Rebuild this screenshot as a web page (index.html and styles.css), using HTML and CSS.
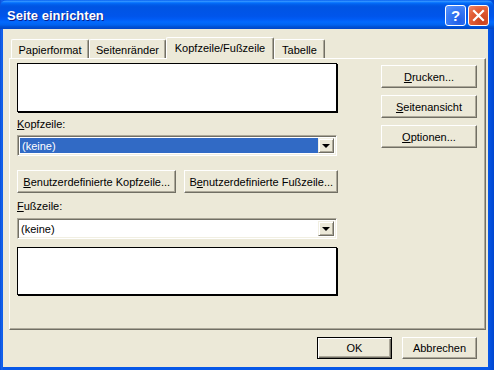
FILE: index.html
```html
<!DOCTYPE html>
<html lang="de">
<head>
  <meta charset="UTF-8">
  <title>Seite einrichten</title>
  <link rel="stylesheet" href="styles.css">
</head>
<body>

  <!-- Dialogfenster -->
  <div class="window">
    <div class="titlebar">
      <span class="title">Seite einrichten</span>
      <div class="caption-buttons">
        <div class="cap-btn help">?</div>
        <div class="cap-btn close">
          <svg width="13" height="13" viewBox="0 0 13 13">
            <path d="M2 2 L11 11 M11 2 L2 11" stroke="#fff" stroke-width="2.2" stroke-linecap="square"/>
          </svg>
        </div>
      </div>
    </div>

    <div class="client">
      <!-- Registerkarten -->
      <div class="tabs">
        <div class="tab tab-papier">Papierformat</div>
        <div class="tab tab-raender">Seitenränder</div>
        <div class="tab tab-kopf active">Kopfzeile/Fußzeile</div>
        <div class="tab tab-tabelle">Tabelle</div>
      </div>

      <div class="panel">
        <div class="left-col">
          <div class="preview preview-top"></div>

          <div class="field-label label-kopf"><u>K</u>opfzeile:</div>
          <div class="combo combo-kopf">
            <div class="combo-text selected"><span class="focus-rect">(keine)</span></div>
            <div class="combo-btn"><span class="arrow"></span></div>
          </div>

          <div class="custom-row">
            <button class="btn btn-custom-kopf"><u>B</u>enutzerdefinierte Kopfzeile...</button>
            <button class="btn btn-custom-fuss">B<u>e</u>nutzerdefinierte Fußzeile...</button>
          </div>

          <div class="field-label label-fuss"><u>F</u>ußzeile:</div>
          <div class="combo combo-fuss">
            <div class="combo-text">(keine)</div>
            <div class="combo-btn"><span class="arrow"></span></div>
          </div>

          <div class="preview preview-bottom"></div>
        </div>

        <div class="right-col">
          <button class="btn side-btn"><u>D</u>rucken...</button>
          <button class="btn side-btn"><u>S</u>eitenansicht</button>
          <button class="btn side-btn"><u>O</u>ptionen...</button>
        </div>
      </div>

      <!-- OK / Abbrechen -->
      <div class="dialog-buttons">
        <button class="btn default">OK</button>
        <button class="btn">Abbrechen</button>
      </div>
    </div>
  </div>

</body>
</html>
```
FILE: styles.css
```css
/* Grundlayout */
body {
  margin: 0;
  background-color: #0055e5;
  font-family: "Liberation Sans", Arial, sans-serif;
  font-size: 11px;
  color: #000;
}

.window {
  width: 494px;
  height: 370px;
  display: flex;
  flex-direction: column;
  background: linear-gradient(to right, #0a4fd8 0px, #1665ee 2px, #0758e8 3px, #0758e8 488px, #0046d0 494px);
  box-sizing: border-box;
}

/* Titelleiste */
.titlebar {
  height: 29px;
  flex-shrink: 0;
  display: flex;
  align-items: center;
  justify-content: space-between;
  padding: 0 5px 0 7px;
  border-radius: 7px 7px 0 0;
  background: linear-gradient(to bottom,
    #0058ee 0%, #3593ff 4%, #288eff 6%, #127dff 8%, #036ffc 10%,
    #0262ee 14%, #0057e5 20%, #0054e3 24%, #0055eb 56%, #005bf5 66%,
    #026afe 76%, #0062ef 86%, #0052d6 92%, #0046c8 100%);
}

.title {
  color: #fff;
  font-weight: bold;
  font-size: 13px;
  text-shadow: 1px 1px 0 #0a1e8a;
  margin-top: 1px;
}

.caption-buttons {
  display: flex;
  gap: 2px;
  margin-top: 1px;
}

.cap-btn {
  width: 21px;
  height: 21px;
  box-sizing: border-box;
  border: 1px solid #fff;
  border-radius: 3px;
  display: flex;
  align-items: center;
  justify-content: center;
}

.cap-btn.help {
  background: radial-gradient(circle at 70% 80%, #1f5ee8 0%, #3b7cf5 60%, #5c97ff 100%);
  color: #fff;
  font-weight: bold;
  font-size: 15px;
}

.cap-btn.close {
  background: radial-gradient(circle at 70% 80%, #c9401c 0%, #e35e36 60%, #f0886a 100%);
}

/* Arbeitsbereich */
.client {
  flex: 1;
  margin: 0 6px 3px 3px;
  padding: 8px 2px 0 6px;
  background-color: #ece9d8;
  display: flex;
  flex-direction: column;
}

/* Registerkarten */
.tabs {
  display: flex;
  align-items: flex-end;
  height: 21px;
  margin-left: 2px;
  position: relative;
  z-index: 1;
}

.tab {
  height: 19px;
  box-sizing: border-box;
  display: flex;
  align-items: center;
  justify-content: center;
  border-top: 1px solid #fff;
  border-left: 1px solid #fff;
  border-right: 1px solid #716f64;
  box-shadow: inset -1px 0 0 #aca899;
  border-radius: 2px 2px 0 0;
  background-color: #ece9d8;
  padding-top: 1px;
}

.tab-papier { width: 78px; }
.tab-raender { width: 77px; }
.tab-kopf { width: 108px; }
.tab-tabelle { width: 51px; }

.tab.active {
  height: 22px;
  margin-bottom: -1px;
  padding-bottom: 2px;
}

/* Karteninhalt */
.panel {
  width: 477px;
  height: 272px;
  box-sizing: border-box;
  display: flex;
  padding: 4px 8px 0 7px;
  border-top: 1px solid #fff;
  border-left: 1px solid #fff;
  border-right: 1px solid #716f64;
  border-bottom: 1px solid #716f64;
  box-shadow: inset -1px -1px 0 #aca899;
}

.left-col {
  width: 321px;
  display: flex;
  flex-direction: column;
}

.right-col {
  margin-left: auto;
  width: 96px;
  display: flex;
  flex-direction: column;
  padding-top: 2px;
}

.preview {
  width: 320px;
  box-sizing: border-box;
  background-color: #fff;
  border: 1px solid #000;
  box-shadow: 1px 1px 0 #000;
}

.preview-top { height: 49px; }

.preview-bottom {
  height: 48px;
  margin-top: 8px;
}

.field-label {
  line-height: 13px;
}

.label-kopf { margin-top: 6px; }
.label-fuss { margin-top: 7px; }

/* Kombinationsfeld */
.combo {
  width: 320px;
  height: 21px;
  box-sizing: border-box;
  display: flex;
  align-items: stretch;
  background-color: #fff;
  border-top: 1px solid #aca899;
  border-left: 1px solid #aca899;
  border-right: 1px solid #fff;
  border-bottom: 1px solid #fff;
  box-shadow: inset 1px 1px 0 #716f64, inset -1px -1px 0 #f1efe2;
  padding: 2px 2px 2px 2px;
}

.combo-kopf { margin-top: 4px; }
.combo-fuss { margin-top: 5px; }

.combo-text {
  flex: 1;
  display: flex;
  align-items: center;
  padding-left: 1px;
}

.combo-text.selected {
  background-color: #316ac5;
  color: #fff;
}

.focus-rect {
  padding: 0 1px;
}

.combo-btn {
  width: 16px;
  box-sizing: border-box;
  background-color: #ece9d8;
  border-top: 1px solid #f1efe2;
  border-left: 1px solid #f1efe2;
  border-right: 1px solid #716f64;
  border-bottom: 1px solid #716f64;
  box-shadow: inset 1px 1px 0 #fff, inset -1px -1px 0 #aca899;
  display: flex;
  align-items: center;
  justify-content: center;
}

.arrow {
  width: 0;
  height: 0;
  border-left: 4px solid transparent;
  border-right: 4px solid transparent;
  border-top: 4px solid #000;
  margin-top: 1px;
}

/* Schaltflächen */
.btn {
  height: 23px;
  box-sizing: border-box;
  padding: 0;
  font-family: inherit;
  font-size: 11px;
  color: #000;
  background-color: #ece9d8;
  border-top: 1px solid #fff;
  border-left: 1px solid #fff;
  border-right: 1px solid #716f64;
  border-bottom: 1px solid #716f64;
  box-shadow: inset -1px -1px 0 #aca899;
  border-radius: 0;
  text-align: center;
}

.custom-row {
  display: flex;
  margin-top: 14px;
}

.btn-custom-kopf { width: 160px; }

.btn-custom-fuss {
  width: 154px;
  margin-left: 8px;
}

.side-btn {
  width: 96px;
  margin-bottom: 7px;
}

.dialog-buttons {
  display: flex;
  justify-content: flex-end;
  gap: 10px;
  margin-top: 7px;
  padding-right: 9px;
}

.dialog-buttons .btn {
  width: 75px;
  height: 22px;
}

.btn.default {
  border: 1px solid #000;
  box-shadow: inset 1px 1px 0 #fff, inset -1px -1px 0 #716f64, inset -2px -2px 0 #aca899;
}
```
